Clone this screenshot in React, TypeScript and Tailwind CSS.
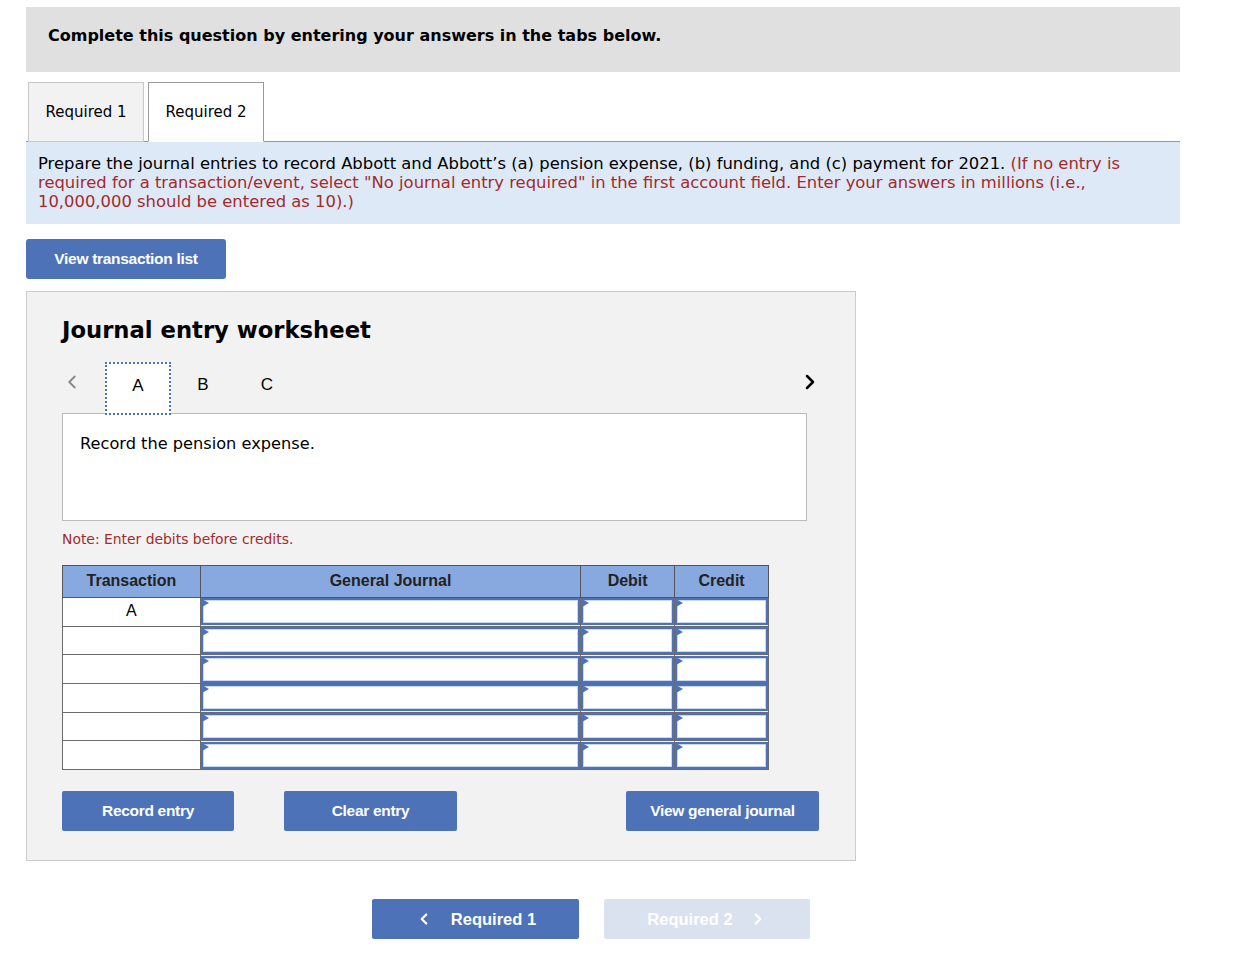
import { ChevronLeft, ChevronRight } from 'lucide-react'

const ROWS = 6

function Cell() {
  return (
    <td className="border border-[#6b6b6b] p-0">
      <div className="relative h-[27px] border-2 border-[#4f72b6] bg-white">
        <div className="h-full border border-[#c9d7ef]" />
        <span className="absolute left-[-1px] top-[-1px] h-0 w-0 border-y-[4px] border-l-[7px] border-y-transparent border-l-[#4f72b6]" />
      </div>
    </td>
  )
}

export default function App() {
  const rows = Array.from({ length: ROWS }, (_, i) => i)

  return (
    <div className="min-h-[971px] bg-white pt-[7px] text-black" style={{ fontFamily: '"DejaVu Sans", Verdana, sans-serif' }}>
      <div className="ml-[26px] w-[1154px]">
        <div className="flex h-[65px] items-center bg-[#e0e0e0] pl-[22px] pb-[8px] text-[16px] font-bold">
          Complete this question by entering your answers in the tabs below.
        </div>

        <div className="mt-[10px] flex gap-[4px] border-b border-[#999] pl-[2px]">
          <div className="-mb-px flex h-[60px] w-[116px] items-center justify-center border border-[#c8c8c8] bg-[#f2f2f2] text-[15px]">
            Required 1
          </div>
          <div className="-mb-px flex h-[60px] w-[116px] items-center justify-center border border-b-white border-[#999] bg-white text-[15px]">
            Required 2
          </div>
        </div>

        <div className="bg-[#dde9f7] px-[12px] pt-[12px] pb-[13px] text-[16.4px] leading-[19px]">
          Prepare the journal entries to record Abbott and Abbott’s (a) pension expense, (b) funding, and (c) payment for 2021.{' '}
          <span className="text-[#a52a2a]">
            (If no entry is required for a transaction/event, select "No journal entry required" in the first account field. Enter your answers in millions (i.e., 10,000,000 should be entered as 10).)
          </span>
        </div>

        <button
          className="mt-[15px] flex h-[40px] w-[200px] items-center justify-center rounded-[3px] bg-[#4d72b7] text-[15.5px] font-bold text-white tracking-[-0.3px]"
          style={{ fontFamily: '"Liberation Sans", Arial, sans-serif' }}
        >
          View transaction list
        </button>

        <div className="mt-[12px] h-[570px] w-[830px] border border-[#cccccc] bg-[#f2f2f2] px-[35px] pt-[23px]">
          <h2 className="text-[22.7px] font-bold leading-[30px]">Journal entry worksheet</h2>

          <div className="mt-[17px] flex h-[52px] items-start" style={{ fontFamily: '"Liberation Sans", Arial, sans-serif' }}>
            <ChevronLeft className="ml-[-1px] mt-[9px] h-[22px] w-[22px] text-[#888]" strokeWidth={2} />
            <div className="ml-[22px] flex h-[53px] w-[66px] justify-center border-2 border-dotted border-[#4d72b7] bg-white pt-[9px] text-[17px]">
              A
            </div>
            <div className="flex h-[52px] w-[64px] justify-center pt-[10px] text-[17px]">B</div>
            <div className="flex h-[52px] w-[64px] justify-center pt-[10px] text-[17px]">C</div>
            <div className="flex-1" />
            <ChevronRight className="mr-[-2px] mt-[8px] h-[24px] w-[24px] text-black" strokeWidth={2.5} />
          </div>

          <div className="-mt-px h-[108px] w-[745px] border border-[#bbbbbb] bg-white px-[17px] pt-[18px] text-[16.2px]">
            Record the pension expense.
          </div>

          <div className="mt-[8px] text-[13.9px] text-[#a52a2a]">Note: Enter debits before credits.</div>

          <table
            className="mt-[15px] w-[707px] border-collapse text-[16px]"
            style={{ fontFamily: '"Liberation Sans", Arial, sans-serif' }}
          >
            <thead>
              <tr className="h-[32px] bg-[#88a9e0] text-[#222]">
                <th className="w-[138px] border border-[#555] font-bold">Transaction</th>
                <th className="w-[381px] border border-[#555] font-bold">General Journal</th>
                <th className="w-[94px] border border-[#555] font-bold">Debit</th>
                <th className="w-[94px] border border-[#555] font-bold">Credit</th>
              </tr>
            </thead>
            <tbody>
              {rows.map((r) => (
                <tr key={r} className="h-[28.7px]">
                  <td className="border border-[#6b6b6b] bg-white pt-[1px] text-center align-top text-[16px]">{r === 0 ? 'A' : ''}</td>
                  <Cell />
                  <Cell />
                  <Cell />
                </tr>
              ))}
            </tbody>
          </table>

          <div
            className="mt-[21px] flex w-[757px] text-[15.5px] font-bold text-white tracking-[-0.3px]"
            style={{ fontFamily: '"Liberation Sans", Arial, sans-serif' }}
          >
            <button className="flex h-[40px] w-[172px] items-center justify-center rounded-[2px] bg-[#4d72b7]">Record entry</button>
            <button className="ml-[50px] flex h-[40px] w-[173px] items-center justify-center rounded-[2px] bg-[#4d72b7]">Clear entry</button>
            <div className="flex-1" />
            <button className="flex h-[40px] w-[193px] items-center justify-center rounded-[2px] bg-[#4d72b7]">View general journal</button>
          </div>
        </div>

        <div
          className="mt-[38px] flex gap-[25px] pl-[346px] text-[16.5px] font-bold text-white"
          style={{ fontFamily: '"Liberation Sans", Arial, sans-serif' }}
        >
          <button className="flex h-[40px] w-[207px] items-center justify-center gap-[18px] rounded-[2px] bg-[#4d72b7]">
            <ChevronLeft className="h-[18px] w-[18px]" strokeWidth={3} />
            Required 1
          </button>
          <button className="flex h-[40px] w-[206px] items-center justify-center gap-[16px] rounded-[2px] bg-[#dbe2ef]">
            Required 2
            <ChevronRight className="h-[18px] w-[18px]" strokeWidth={3} />
          </button>
        </div>
      </div>
    </div>
  )
}
